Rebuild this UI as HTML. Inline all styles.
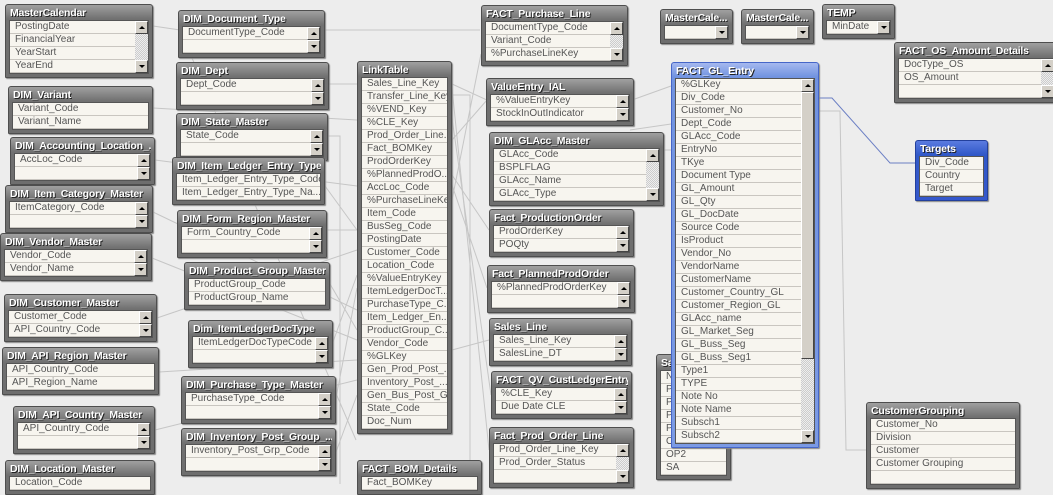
<!DOCTYPE html>
<html><head><meta charset="utf-8"><style>
body{margin:0;width:1053px;height:484px;background:#ededed;overflow:hidden;position:relative;font-family:"Liberation Sans",sans-serif}
.b{position:absolute;background:linear-gradient(#a0a0a0,#707070 14px,#6e6e6e);border:1px solid #4e4e4e;border-radius:3px 3px 1px 1px;box-shadow:1px 1px 1px #888;padding:0 3px 3px 3px;box-sizing:border-box}
.bl{background:linear-gradient(#a5b8ef,#7193e0 14px,#7b9ae4);border-color:#4666c8}
.bd{background:linear-gradient(#5a7be0,#3058c8 14px,#3558cc);border-color:#23409c}
.h{color:#fff;font-weight:bold;font-size:10.5px;height:15px;line-height:16px;text-shadow:1px 1px 0 #222;white-space:nowrap;overflow:hidden;letter-spacing:-.2px;padding-left:1px}
.t{position:relative;background:#f7f5ef;border:1px solid #555}
.s .t{padding-right:13px}
.r{height:12px;line-height:12px;border-bottom:1px solid #c9c6c0;font-size:10px;color:#555;padding-left:5px;white-space:nowrap;overflow:hidden}
.sb{position:absolute;right:0;top:0;bottom:0;width:13px;background:repeating-conic-gradient(#ccc 0 25%,#eee 0 50%) 0 0/2px 2px}
.sb i,.sb b{position:absolute;left:0;width:11px;height:11px;background:#d4d0c8;border:1px solid;border-color:#fff #444 #444 #fff}
.sb i{top:0}.sb b{bottom:0}
.sb i:after,.sb b:after{content:"";position:absolute;left:3px;top:4px;border:3px solid transparent}
.sb i:after{border-bottom:3px solid #000;top:1px}
.sb b:after{border-top:3px solid #000;top:4px}
svg{position:absolute;left:0;top:0}
</style></head><body>
<svg width="1053" height="484"><g stroke="#c6c6c6" fill="none" stroke-width="1">
<path d="M153 26 L180 30 L356 440"/><path d="M325 30 L480 30"/><path d="M329 84 L357 84"/><path d="M153 108 L357 120"/><path d="M328 136 L340 136 L340 484"/><path d="M155 160 L357 186"/><path d="M325 186 L357 230"/><path d="M153 212 L357 310"/><path d="M327 230 L357 230"/><path d="M152 258 L357 340"/><path d="M330 284 L357 330"/><path d="M157 318 L357 250"/><path d="M333 342 L357 275"/><path d="M159 372 L357 360"/><path d="M336 398 L357 288"/><path d="M155 430 L357 380"/><path d="M336 452 L357 395"/>
<path d="M452 84 L487 100 L452 140"/><path d="M452 95 L470 95 L470 484"/><path d="M452 175 L489 230"/><path d="M452 185 L487 288"/><path d="M452 200 L481 54"/><path d="M452 350 L489 340"/><path d="M452 118 L491 395"/><path d="M452 88 L489 450"/>
<path d="M664 150 L671 150"/><path d="M632 100 L671 86"/><path d="M630 130 L671 124"/><path d="M819 111 L840 111 L846 450 L866 450"/>
</g><path d="M819 98 L832 98 L890 163 L915 163" stroke="#6b7fc4" fill="none"/></svg>

<div class="b s" style="left:5px;top:4px;width:148px"><div class="h">MasterCalendar</div><div class="t"><div class="r">PostingDate</div><div class="r">FinancialYear</div><div class="r">YearStart</div><div class="r">YearEnd</div><div class="sb"><i></i><b></b></div></div></div>
<div class="b s" style="left:178px;top:10px;width:147px"><div class="h">DIM_Document_Type</div><div class="t"><div class="r">DocumentType_Code</div><div class="r"></div><div class="sb"><i></i><b></b></div></div></div>
<div class="b s" style="left:176px;top:62px;width:153px"><div class="h">DIM_Dept</div><div class="t"><div class="r">Dept_Code</div><div class="r"></div><div class="sb"><i></i><b></b></div></div></div>
<div class="b" style="left:8px;top:86px;width:145px"><div class="h">DIM_Variant</div><div class="t"><div class="r">Variant_Code</div><div class="r">Variant_Name</div></div></div>
<div class="b s" style="left:176px;top:113px;width:152px"><div class="h">DIM_State_Master</div><div class="t"><div class="r">State_Code</div><div class="r"></div><div class="sb"><i></i><b></b></div></div></div>
<div class="b s" style="left:10px;top:137px;width:145px"><div class="h">DIM_Accounting_Location_...</div><div class="t"><div class="r">AccLoc_Code</div><div class="r"></div><div class="sb"><i></i><b></b></div></div></div>
<div class="b" style="left:172px;top:157px;width:153px"><div class="h">DIM_Item_Ledger_Entry_Type</div><div class="t"><div class="r">Item_Ledger_Entry_Type_Code</div><div class="r">Item_Ledger_Entry_Type_Na...</div></div></div>
<div class="b s" style="left:5px;top:185px;width:148px"><div class="h">DIM_Item_Category_Master</div><div class="t"><div class="r">ItemCategory_Code</div><div class="r"></div><div class="sb"><i></i><b></b></div></div></div>
<div class="b s" style="left:177px;top:210px;width:150px"><div class="h">DIM_Form_Region_Master</div><div class="t"><div class="r">Form_Country_Code</div><div class="r"></div><div class="sb"><i></i><b></b></div></div></div>
<div class="b s" style="left:0px;top:233px;width:152px"><div class="h">DIM_Vendor_Master</div><div class="t"><div class="r">Vendor_Code</div><div class="r">Vendor_Name</div><div class="sb"><i></i><b></b></div></div></div>
<div class="b" style="left:184px;top:262px;width:146px"><div class="h">DIM_Product_Group_Master</div><div class="t"><div class="r">ProductGroup_Code</div><div class="r">ProductGroup_Name</div></div></div>
<div class="b s" style="left:4px;top:294px;width:153px"><div class="h">DIM_Customer_Master</div><div class="t"><div class="r">Customer_Code</div><div class="r">API_Country_Code</div><div class="sb"><i></i><b></b></div></div></div>
<div class="b s" style="left:188px;top:320px;width:145px"><div class="h">Dim_ItemLedgerDocType</div><div class="t"><div class="r">ItemLedgerDocTypeCode</div><div class="r"></div><div class="sb"><i></i><b></b></div></div></div>
<div class="b" style="left:2px;top:347px;width:157px"><div class="h">DIM_API_Region_Master</div><div class="t"><div class="r">API_Country_Code</div><div class="r">API_Region_Name</div></div></div>
<div class="b s" style="left:181px;top:376px;width:155px"><div class="h">DIM_Purchase_Type_Master</div><div class="t"><div class="r">PurchaseType_Code</div><div class="r"></div><div class="sb"><i></i><b></b></div></div></div>
<div class="b s" style="left:13px;top:406px;width:142px"><div class="h">DIM_API_Country_Master</div><div class="t"><div class="r">API_Country_Code</div><div class="r"></div><div class="sb"><i></i><b></b></div></div></div>
<div class="b s" style="left:181px;top:428px;width:155px"><div class="h">DIM_Inventory_Post_Group_...</div><div class="t"><div class="r">Inventory_Post_Grp_Code</div><div class="r"></div><div class="sb"><i></i><b></b></div></div></div>
<div class="b" style="left:5px;top:460px;width:150px"><div class="h">DIM_Location_Master</div><div class="t"><div class="r">Location_Code</div></div></div>

<div class="b" style="left:357px;top:61px;width:95px"><div class="h">LinkTable</div><div class="t"><div class="r">Sales_Line_Key</div><div class="r">Transfer_Line_Key</div><div class="r">%VEND_Key</div><div class="r">%CLE_Key</div><div class="r">Prod_Order_Line...</div><div class="r">Fact_BOMKey</div><div class="r">ProdOrderKey</div><div class="r">%PlannedProdO...</div><div class="r">AccLoc_Code</div><div class="r">%PurchaseLineKey</div><div class="r">Item_Code</div><div class="r">BusSeg_Code</div><div class="r">PostingDate</div><div class="r">Customer_Code</div><div class="r">Location_Code</div><div class="r">%ValueEntryKey</div><div class="r">ItemLedgerDocT...</div><div class="r">PurchaseType_C...</div><div class="r">Item_Ledger_En...</div><div class="r">ProductGroup_C...</div><div class="r">Vendor_Code</div><div class="r">%GLKey</div><div class="r">Gen_Prod_Post_...</div><div class="r">Inventory_Post_...</div><div class="r">Gen_Bus_Post_G...</div><div class="r">State_Code</div><div class="r">Doc_Num</div></div></div>
<div class="b" style="left:357px;top:460px;width:125px"><div class="h">FACT_BOM_Details</div><div class="t"><div class="r">Fact_BOMKey</div></div></div>

<div class="b s" style="left:481px;top:5px;width:147px"><div class="h">FACT_Purchase_Line</div><div class="t"><div class="r">DocumentType_Code</div><div class="r">Variant_Code</div><div class="r">%PurchaseLineKey</div><div class="sb"><i></i><b></b></div></div></div>
<div class="b s" style="left:486px;top:78px;width:148px"><div class="h">ValueEntry_IAL</div><div class="t"><div class="r">%ValueEntryKey</div><div class="r">StockInOutIndicator</div><div class="sb"><i></i><b></b></div></div></div>
<div class="b s" style="left:489px;top:132px;width:175px"><div class="h">DIM_GLAcc_Master</div><div class="t"><div class="r">GLAcc_Code</div><div class="r">BSPLFLAG</div><div class="r">GLAcc_Name</div><div class="r">GLAcc_Type</div><div class="sb"><i></i><b></b></div></div></div>
<div class="b s" style="left:489px;top:209px;width:145px"><div class="h">Fact_ProductionOrder</div><div class="t"><div class="r">ProdOrderKey</div><div class="r">POQty</div><div class="sb"><i></i><b></b></div></div></div>
<div class="b s" style="left:487px;top:265px;width:148px"><div class="h">Fact_PlannedProdOrder</div><div class="t"><div class="r">%PlannedProdOrderKey</div><div class="r"></div><div class="sb"><i></i><b></b></div></div></div>
<div class="b s" style="left:489px;top:318px;width:143px"><div class="h">Sales_Line</div><div class="t"><div class="r">Sales_Line_Key</div><div class="r">SalesLine_DT</div><div class="sb"><i></i><b></b></div></div></div>
<div class="b s" style="left:491px;top:371px;width:141px"><div class="h">FACT_QV_CustLedgerEntry</div><div class="t"><div class="r">%CLE_Key</div><div class="r">Due Date CLE</div><div class="sb"><i></i><b></b></div></div></div>
<div class="b s" style="left:489px;top:427px;width:145px"><div class="h">Fact_Prod_Order_Line</div><div class="t"><div class="r">Prod_Order_Line_Key</div><div class="r">Prod_Order_Status</div><div class="r"></div><div class="sb"><i></i><b></b></div></div></div>

<div class="b" style="left:656px;top:354px;width:75px"><div class="h">Sales</div><div class="t"><div class="r">N</div><div class="r">P</div><div class="r">P</div><div class="r">P</div><div class="r">P</div><div class="r">O</div><div class="r">OP2</div><div class="r">SA</div></div></div>

<div class="b s" style="left:660px;top:9px;width:73px"><div class="h">MasterCale...</div><div class="t"><div class="r"></div><div class="sb"><i></i><b></b></div></div></div>
<div class="b s" style="left:741px;top:9px;width:73px"><div class="h">MasterCale...</div><div class="t"><div class="r"></div><div class="sb"><i></i><b></b></div></div></div>
<div class="b s" style="left:822px;top:4px;width:73px"><div class="h">TEMP</div><div class="t"><div class="r">MinDate</div><div class="sb"><i></i><b></b></div></div></div>
<div class="b s" style="left:894px;top:42px;width:165px"><div class="h">FACT_OS_Amount_Details</div><div class="t"><div class="r">DocType_OS</div><div class="r">OS_Amount</div><div class="r"></div><div class="sb"><i></i><b></b></div></div></div>

<div class="b bl s" style="left:671px;top:62px;width:148px"><div class="h">FACT_GL_Entry</div><div class="t"><div class="r">%GLKey</div><div class="r">Div_Code</div><div class="r">Customer_No</div><div class="r">Dept_Code</div><div class="r">GLAcc_Code</div><div class="r">EntryNo</div><div class="r">TKye</div><div class="r">Document Type</div><div class="r">GL_Amount</div><div class="r">GL_Qty</div><div class="r">GL_DocDate</div><div class="r">Source Code</div><div class="r">IsProduct</div><div class="r">Vendor_No</div><div class="r">VendorName</div><div class="r">CustomerName</div><div class="r">Customer_Country_GL</div><div class="r">Customer_Region_GL</div><div class="r">GLAcc_name</div><div class="r">GL_Market_Seg</div><div class="r">GL_Buss_Seg</div><div class="r">GL_Buss_Seg1</div><div class="r">Type1</div><div class="r">TYPE</div><div class="r">Note No</div><div class="r">Note Name</div><div class="r">Subsch1</div><div class="r">Subsch2</div><div class="sb"><i></i><b></b><div style="position:absolute;left:0;top:13px;width:11px;height:265px;background:#d4d0c8;border:1px solid;border-color:#fff #444 #444 #fff"></div></div></div></div>
<div class="b bd" style="left:915px;top:140px;width:73px"><div class="h">Targets</div><div class="t"><div class="r">Div_Code</div><div class="r">Country</div><div class="r">Target</div></div></div>
<div class="b" style="left:866px;top:402px;width:154px"><div class="h">CustomerGrouping</div><div class="t"><div class="r">Customer_No</div><div class="r">Division</div><div class="r">Customer</div><div class="r">Customer Grouping</div><div class="r"></div></div></div>
</body></html>
